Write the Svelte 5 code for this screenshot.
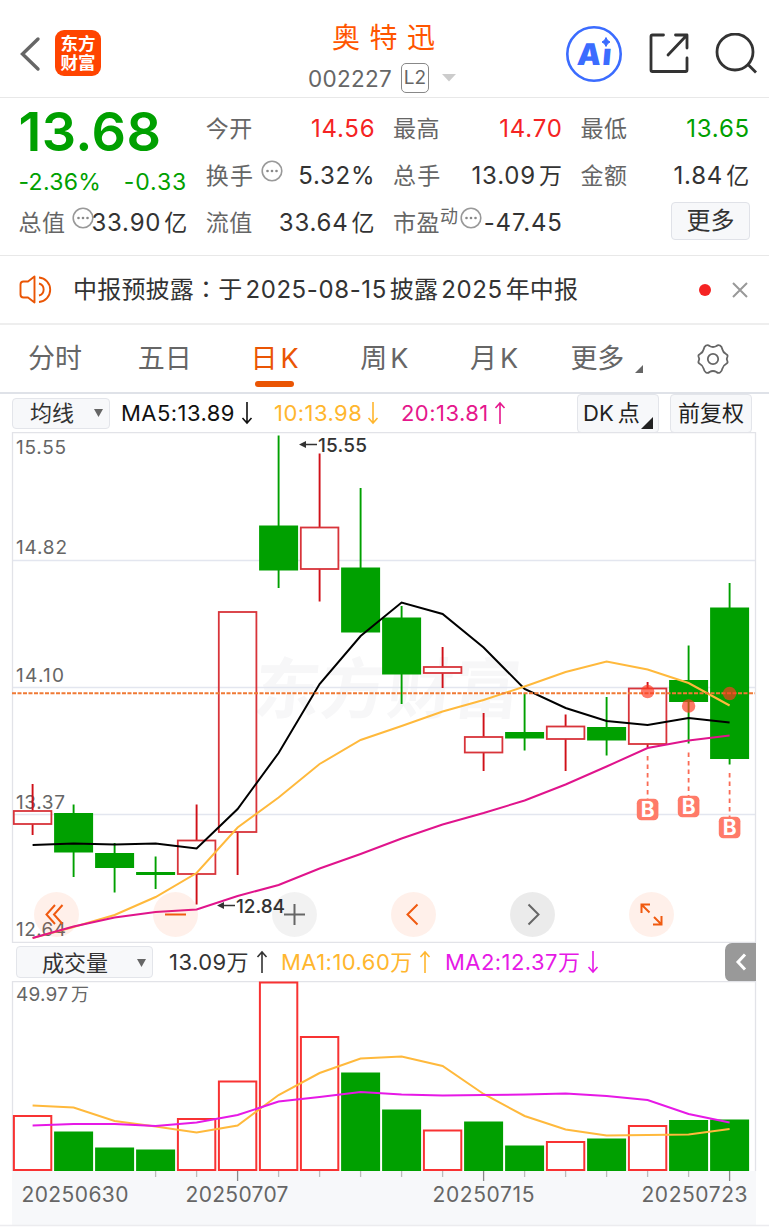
<script>
  const tabs = ['分时', '五日', '日K', '周K', '月K', '更多'];
  let activeTab = '日K';

  const labels = [
    { text: '15.55', y: 454, w: 50 },
    { text: '14.82', y: 554, w: 51 },
    { text: '14.10', y: 682, w: 48 },
    { text: '13.37', y: 809, w: 49 },
    { text: '12.64', y: 936, w: 50 }
  ];

  // high, body top, body bottom, low, up, volume top
  const days = [
    [784, 811, 824, 835, true, 1116],
    [804.5, 813, 852.5, 877, false, 1131.5],
    [843, 853, 868, 892.5, false, 1147.5],
    [856.5, 872, 875, 889, false, 1149.5],
    [804.5, 840.5, 874, 904.5, true, 1119],
    [612, 612, 832, 875, true, 1081.5],
    [435.5, 525.5, 570.5, 588, false, 982.5],
    [453.5, 527.5, 569, 601.5, true, 1037],
    [488, 567.5, 632.5, 632.5, false, 1072.5],
    [606, 617.5, 674.5, 704, false, 1109.5],
    [647, 667, 673, 688, true, 1130.5],
    [713, 737, 752.5, 771, true, 1121.5],
    [693.5, 732, 738.5, 750.5, false, 1145.5],
    [714.5, 726.5, 739, 771, true, 1142],
    [697, 727, 740.5, 755.5, false, 1138.5],
    [682, 688.5, 744, 747.5, true, 1126],
    [645.5, 680, 702, 743.5, false, 1120],
    [583, 607.5, 759, 764.5, false, 1119.5]
  ];
  const redVolume = [0, 4, 5, 6, 7, 10, 13, 15];

  const ma5 = [845, 843.5, 844.5, 843.5, 848.5, 809, 753, 684, 636, 602.5, 614, 647.5, 689, 708, 721, 725, 718, 722.5];
  const ma10 = [938, 927, 915, 897, 873, 827.5, 797.5, 764, 740, 726, 711.5, 700, 686.5, 672, 661.5, 669.5, 683, 705.5];
  const ma20 = [938, 926.5, 917.5, 912, 909.5, 896, 885, 868.5, 854, 838.5, 824.5, 813, 800.5, 784.5, 766.5, 748, 740.5, 735.5];
  const vol1 = [1105.5, 1107.5, 1121, 1126.5, 1132.5, 1125.5, 1095, 1073, 1058.5, 1056.5, 1066, 1094, 1116, 1129.5, 1135.5, 1135, 1134.5, 1129];
  const vol2 = [1125.5, 1124, 1124, 1126, 1122.5, 1115, 1101.5, 1097, 1092, 1094.5, 1095.5, 1095, 1094.5, 1093.5, 1096, 1100, 1114, 1122.5];

  const marks = [
    { i: 15, dot: 691.5, from: 756, box: 809.5 },
    { i: 16, dot: 706, from: 752.5, box: 806.5 },
    { i: 17, dot: 693.5, from: 773, box: 827.5 }
  ];

  const dates = [
    { text: '20250630', x: 21.5, w: 107 },
    { text: '20250707', x: 185.5, w: 103 },
    { text: '20250715', x: 432.5, w: 102 },
    { text: '20250723', x: 641.5, w: 106 }
  ];

  const cx = i => 32.6 + i * 41;
  const line = list => list.map((y, i) => `${cx(i)},${y}`).join(' ');
</script>

{#snippet dots()}
  <svg class="dots" width="22" height="22" viewBox="0 0 22 22">
    <circle cx="11" cy="11" r="9.8" fill="none" stroke="#999" stroke-width="1.6" />
    <circle cx="6.5" cy="11" r="1.3" fill="#888" />
    <circle cx="11" cy="11" r="1.3" fill="#888" />
    <circle cx="15.5" cy="11" r="1.3" fill="#888" />
  </svg>
{/snippet}

{#snippet arrow(up)}
  <svg class="arrow" width="12" height="24" viewBox="0 0 12 24">
    <path d={up ? 'M6 23V2M1.5 7L6 2l4.5 5' : 'M6 1v21M1.5 17L6 22l4.5-5'} fill="none" stroke="currentColor" stroke-width="1.6" />
  </svg>
{/snippet}

<div class="page">
  <header>
    <svg class="back" width="22" height="36" viewBox="0 0 22 36">
      <path d="M19 3L3.5 18L19 33" fill="none" stroke="#666" stroke-width="3.4" stroke-linecap="round" />
    </svg>
    <div class="logo"><span>东方</span><span>财富</span></div>
    <div class="title">
      <div class="name">奥特迅</div>
      <div class="code">
        <span class="num">002227</span>
        <span class="level">L2</span>
        <svg width="14" height="8" viewBox="0 0 14 8"><path d="M0 0h14L7 7.5z" fill="#ccc" /></svg>
      </div>
    </div>
    <div class="actions">
      <svg width="56" height="56" viewBox="0 0 56 56">
        <circle cx="28" cy="28" r="26.7" fill="none" stroke="#3b6cff" stroke-width="2.6" />
        <text class="ai" transform="translate(10.5 38.5) skewX(-5)">A<tspan dx="1.5">ı</tspan></text>
        <path d="M40 11.5q1 3.5 4 4.5q-3 1-4 4.5q-1-3.5-4-4.5q3-1 4-4.500z" fill="#3b6cff" stroke="#3b6cff" />
      </svg>
      <svg width="42" height="42" viewBox="0 0 42 42" fill="none" stroke="#333" stroke-width="2.8" stroke-linecap="round" stroke-linejoin="round">
        <path d="M15.5 2H4.5Q3 2 3 3.5V37Q3 38.5 4.5 38.5H37.5Q39 38.5 39 37V25M27.5 2H39V15M38 3L20 22" />
      </svg>
      <svg width="42" height="42" viewBox="0 0 42 42" fill="none" stroke="#333" stroke-width="2.8">
        <circle cx="20" cy="19" r="18" /><path d="M33 31.5l8 8" />
      </svg>
    </div>
  </header>

  <section class="quote">
    <div class="col">
      <div class="price">13.68</div>
      <div class="row change"><span>-2.36%</span><span class="diff">-0.33</span></div>
      <div class="row"><span class="label">总值{@render dots()}</span><b class="over">33.90<i>亿</i></b></div>
    </div>
    <div class="col">
      <div class="row"><span class="label">今开</span><b class="red">14.56</b></div>
      <div class="row"><span class="label wide">换手{@render dots()}</span><b>5.32%</b></div>
      <div class="row"><span class="label">流值</span><b>33.64<i>亿</i></b></div>
    </div>
    <div class="col">
      <div class="row"><span class="label">最高</span><b class="red">14.70</b></div>
      <div class="row"><span class="label wide">总手</span><b>13.09<i>万</i></b></div>
      <div class="row"><span class="label pe">市盈<sup>动</sup>{@render dots()}</span><b class="over">-47.45</b></div>
    </div>
    <div class="col">
      <div class="row"><span class="label">最低</span><b class="green">13.65</b></div>
      <div class="row"><span class="label">金额</span><b>1.84<i>亿</i></b></div>
      <div class="row end"><button class="more">更多</button></div>
    </div>
  </section>

  <section class="notice">
    <svg width="34" height="30" viewBox="0 0 34 30" fill="none" stroke="#ea5504" stroke-width="1.9" stroke-linejoin="round">
      <path d="M15.5 1.5L9 6.5H4.5Q1.5 6.5 1.5 9.5V19.5Q1.5 22.5 4.5 22.5H9L15.5 27.5z" />
      <path d="M20 8.5a6.2 6.2 0 0 1 0 12M20 2.5a12.3 12.3 0 0 1 0 24.5" />
    </svg>
    <p>中报预披露<span class="colon">：</span>于<em>2025-08-15</em>披露<em>2025</em>年中报</p>
    <span class="dot"></span>
    <svg width="16" height="16" viewBox="0 0 16 16"><path d="M1 1l14 14M15 1L1 15" stroke="#999" stroke-width="2" /></svg>
  </section>

  <nav>
    {#each tabs as tab}
      <button class:active={tab === activeTab} class:menu={tab === '更多'} on:click={() => (activeTab = tab)}>
        {#if tab.endsWith('K')}{tab[0]}<em>K</em>{:else}{tab}{/if}
        {#if tab === '更多'}<svg class="corner" width="8" height="8" viewBox="0 0 8 8"><path d="M8 0v8H0z" fill="#666" /></svg>{/if}
      </button>
    {/each}
    <div class="gear">
      <svg width="34" height="34" viewBox="0 0 34 34" fill="none" stroke="#666" stroke-width="1.8" stroke-linejoin="round">
        <path d="M10 3.5Q12 2.5 13.5 4Q17 6 20.5 4Q22 2.5 24 3.5Q26 4.8 26.2 7Q27 10.5 30 12Q32 13 31.5 14.5Q30 17 31.5 19.5Q32 21 30 22Q27 23.5 26.2 27Q26 29.2 24 30.5Q22 31.5 20.5 30Q17 28 13.5 30Q12 31.5 10 30.5Q8 29.2 7.8 27Q7 23.5 4 22Q2 21 2.5 19.5Q4 17 2.5 14.5Q2 13 4 12Q7 10.5 7.8 7Q8 4.8 10 3.5z" />
        <circle cx="17" cy="17" r="5.2" />
      </svg>
    </div>
  </nav>

  <div class="bar ma">
    <button class="select">均线<svg width="9" height="8" viewBox="0 0 9 8"><path d="M0 0h9L4.5 8z" fill="#666" /></svg></button>
    <span class="leg k1">MA5:13.89{@render arrow(false)}</span>
    <span class="leg k2">10:13.98{@render arrow(false)}</span>
    <span class="leg k3">20:13.81{@render arrow(true)}</span>
    <button class="tool dk">DK<i>点</i><svg width="12" height="12" viewBox="0 0 12 12"><path d="M12 0v12H0z" fill="#222" /></svg></button>
    <button class="tool">前复权</button>
  </div>

  <div class="kline">
    <svg width="769" height="511" viewBox="0 432 769 511">
      <text class="mark" transform="translate(252 713) skewX(-6)" textLength="266">东方财富</text>
      <path d="M12 560.5H755M12 687.5H755M12 814.5H755" stroke="#e3e6ef" stroke-width="1.6" />
      <path d="M12.5 943V432.5H755.5V943M12 942.5H756" fill="none" stroke="#e2e3e8" stroke-width="1.3" />
      {#each labels as l}
        <text class="axis" x="16" y={l.y} textLength={l.w}>{l.text}</text>
      {/each}
      {#each days as [high, top, bottom, low, up], i}
        {#if up}
          <path d="M{cx(i)} {high}V{top}M{cx(i)} {bottom}V{low}" stroke="#d01018" stroke-width="1.9" />
          <rect x={cx(i) - 18.8} y={top} width="37.6" height={bottom - top} fill={i === 0 || i === 5 ? 'none' : '#fff'} stroke="#d8343a" stroke-width="1.8" />
        {:else}
          <path d="M{cx(i)} {high}V{low}" stroke="#00a000" stroke-width="1.9" />
          <rect x={cx(i) - 19.5} y={top} width="39" height={bottom - top} fill="#00a000" />
        {/if}
      {/each}
      <polyline points={line(ma5)} stroke="#000" />
      <polyline points={line(ma10)} stroke="#ffb93c" />
      <polyline points={line(ma20)} stroke="#e0148c" />
      <path d="M12 693.3H755" stroke="#f07a35" stroke-width="2" stroke-dasharray="4 1.5" />
      {#each marks as m}
        <circle cx={cx(m.i)} cy={m.dot} r="6.7" fill="#ff3a20" fill-opacity=".68" />
        <path d="M{cx(m.i)} {m.from}V{m.box - 10}" stroke="#fa6b55" stroke-width="1.8" stroke-dasharray="4.5 4" />
        <rect x={cx(m.i) - 10.8} y={m.box - 10.8} width="21.6" height="21.6" rx="4.5" fill="#ff7b69" />
        <text class="buy" x={cx(m.i)} y={m.box + 7.5}>B</text>
      {/each}
      <path d="M302 444.5H317M220 905.5H235" stroke="#333" stroke-width="1.7" />
      <path d="M299 444.5l7-3.5v7zM217 905.5l7-3.5v7z" fill="#333" />
      <text class="peak" x="318" y="451.5" textLength="49">15.55</text>
      <text class="peak" x="236" y="913" textLength="49">12.84</text>
    </svg>
    <div class="float">
      <svg viewBox="0 0 45 45" class="hot"><path d="M21 13L12.5 22.5L21 32M28.5 13L20 22.5L28.5 32" /></svg>
      <svg viewBox="0 0 45 45" class="hot"><path d="M12 22.5h21" /></svg>
      <svg viewBox="0 0 45 45" class="cold light"><path d="M12 22.5h21M22.5 12v21" /></svg>
      <svg viewBox="0 0 45 45" class="hot"><path d="M26.5 12.5L16.5 22.5L26.5 32.5" /></svg>
      <svg viewBox="0 0 45 45" class="cold"><path d="M18.5 12.5L28.5 22.5L18.5 32.5" /></svg>
      <svg viewBox="0 0 45 45" class="hot"><path d="M12.5 21V12.5H21M12.5 12.5l8 8M25 25L32.5 32.5M24 32.5H32.5V24" /></svg>
    </div>
  </div>

  <div class="bar vol">
    <button class="select">成交量<svg width="9" height="8" viewBox="0 0 9 8"><path d="M0 0h9L4.5 8z" fill="#666" /></svg></button>
    <span class="leg v0">13.09万{@render arrow(true)}</span>
    <span class="leg v1">MA1:10.60万{@render arrow(true)}</span>
    <span class="leg v2">MA2:12.37万{@render arrow(false)}</span>
    <button class="fold" aria-label="收起">
      <svg width="12" height="20" viewBox="0 0 12 20"><path d="M10 2.5L3 10l7 7.5" fill="none" stroke="#fff" stroke-width="3" /></svg>
    </button>
  </div>

  <svg class="volume" width="769" height="250" viewBox="0 981 769 250">
    <rect x="12" y="1171" width="744" height="54" fill="#f7f8fa" />
    <path d="M12.5 1171V981.5H755.5V1171" fill="none" stroke="#e2e3e8" stroke-width="1.3" />
    <path d="M0 1225.5H769" stroke="#ececef" stroke-width="1.5" />
    <text class="axis" x="16" y="1001" textLength="52">49.97</text>
    <text class="axis wan" x="71" y="1000.5">万</text>
    {#each days as day, i}
      {#if redVolume.includes(i)}
        <rect x={cx(i) - 18.7} y={day[5]} width="37.4" height={1170 - day[5]} fill="#fff" stroke="#f83232" stroke-width="2" />
      {:else}
        <rect x={cx(i) - 19.5} y={day[5]} width="39" height={1171 - day[5]} fill="#00a000" />
      {/if}
      {#if i > 2}
        <path d="M{cx(i)} 1171V{i % 6 === 5 ? 1181 : 1177}" stroke={i % 6 === 5 ? '#888' : '#bbb'} stroke-width="1.3" />
      {/if}
    {/each}
    <polyline points={line(vol1)} stroke="#ffb93c" />
    <polyline points={line(vol2)} stroke="#e619e6" />
    {#each dates as d}
      <text class="date" x={d.x} y="1202" textLength={d.w}>{d.text}</text>
    {/each}
  </svg>
</div>

<style>
  :global(body) {
    margin: 0;
    background: #fff;
  }
  .page {
    width: 769px;
    height: 1231px;
    overflow: hidden;
    font-family: Inter, "Noto Sans CJK SC", sans-serif;
    line-height: 1.2;
    color: #333;
  }
  svg {
    display: block;
    flex: none;
  }
  button {
    font: inherit;
    color: inherit;
    letter-spacing: inherit;
    margin: 0;
    padding: 0;
    border: 0;
    background: none;
  }
  i, em, b {
    font-style: normal;
    font-weight: 400;
  }
  .red { color: #f52323; }
  .green { color: #00a000; }

  header {
    display: flex;
    align-items: center;
    height: 98px;
    padding: 0 12px 0 19px;
    box-sizing: border-box;
    border-bottom: 1px solid #e8e8e8;
  }
  .back {
    margin: 10px 14px 0 0;
  }
  .logo {
    width: 46px;
    height: 46px;
    margin-top: 9px;
    border-radius: 9px;
    background: #ff4400;
    color: #fff;
    display: flex;
    flex-direction: column;
    align-items: center;
    justify-content: center;
    font-size: 17.5px;
    font-weight: 700;
    line-height: 19px;
  }
  .title {
    width: 170px;
    margin-left: 207px;
    display: flex;
    flex-direction: column;
  }
  .name {
    font-size: 28px;
    line-height: 38px;
    letter-spacing: 9.5px;
    color: #ff5500;
    margin: 15px 0 0 24px;
  }
  .code {
    display: flex;
    align-items: center;
    height: 30px;
    margin: 6px 0 0;
    color: #666;
    font-size: 22.5px;
  }
  .num {
    width: 93px;
    letter-spacing: 0.3px;
  }
  .level {
    width: 26px;
    height: 28px;
    line-height: 28px;
    border: 1px solid #888;
    border-radius: 5px;
    font-size: 19px;
    text-align: center;
    margin-right: 13px;
  }
  .actions {
    display: flex;
    align-items: center;
    margin: 10px 0 0 auto;
    gap: 25.5px;
  }
  .ai {
    font-size: 30px;
    font-weight: 900;
    fill: #3b6cff;
  }

  .quote {
    display: flex;
    gap: 18.7px;
    height: 157px;
    padding: 0 20px 0 18.5px;
    border-bottom: 1px solid #e8e8e8;
    font-size: 24px;
    letter-spacing: 0.8px;
  }
  .col {
    width: 168.7px;
    padding-top: 8px;
  }
  .row {
    display: flex;
    justify-content: space-between;
    align-items: center;
    height: 47px;
    white-space: nowrap;
  }
  .row b {
    margin-right: -1px;
  }
  .row i {
    margin-left: 3px;
    font-size: 23px;
  }
  .label {
    display: flex;
    color: #666;
    font-size: 23px;
    letter-spacing: 0.5px;
    padding-top: 1px;
  }
  .wide {
    letter-spacing: 1.2px;
  }
  .dots {
    margin: -3px 0 0 6.5px;
  }
  .price {
    height: 52px;
    line-height: 52px;
    font-size: 54px;
    font-weight: 600;
    letter-spacing: 0.4px;
    color: #00a000;
  }
  .change {
    height: 42px;
    padding-top: 8px;
    box-sizing: border-box;
    color: #00a000;
    font-size: 23px;
    letter-spacing: 0.3px;
  }
  .diff {
    letter-spacing: 0.9px;
  }
  .row .over {
    margin-left: -16px;
  }
  .pe sup {
    font-size: 18px;
    line-height: 14px;
  }
  .label.pe {
    margin-right: 2px;
  }
  .pe :global(.dots) {
    margin-left: 1.5px;
  }
  .end {
    justify-content: flex-end;
  }
  .more {
    width: 79px;
    height: 38px;
    box-sizing: border-box;
    margin: -5px -1px 0 0;
    border: 1px solid #e0e2e8;
    border-radius: 4px;
    background: #f7f8fa;
    letter-spacing: 0;
  }

  .notice {
    display: flex;
    align-items: center;
    height: 67px;
    padding: 0 21px 0 19px;
    border-bottom: 2px solid #eee;
  }
  .notice p {
    flex: 1;
    margin: 1px 0 0 20px;
    font-size: 24px;
    letter-spacing: 0.2px;
    white-space: nowrap;
  }
  .notice em {
    margin: 0 3px;
    letter-spacing: 0.6px;
  }
  .colon {
    font-family: "Noto Sans CJK TC", sans-serif;
    line-height: 1;
  }
  .dot {
    width: 12px;
    height: 12px;
    margin-right: 21px;
    border-radius: 50%;
    background: #f52323;
  }

  nav {
    display: flex;
    height: 67px;
    border-bottom: 2px solid #dfe2e8;
  }
  nav button, .gear {
    position: relative;
    width: 109.8px;
    box-sizing: border-box;
    display: flex;
    align-items: center;
    justify-content: center;
    font-size: 27px;
    color: #666;
  }
  nav button {
    padding-top: 2px;
  }
  nav em {
    margin-left: 3px;
  }
  nav .active {
    color: #ea5504;
  }
  nav .active::after {
    content: "";
    position: absolute;
    left: 35px;
    bottom: 5px;
    width: 39px;
    height: 6px;
    border-radius: 3px;
    background: #ea5504;
  }
  nav .menu {
    padding-right: 13px;
  }
  .corner {
    position: absolute;
    right: 16px;
    bottom: 19px;
  }
  .gear {
    padding-right: 1px;
  }

  .bar {
    display: flex;
    align-items: center;
    height: 38px;
    font-size: 22px;
    white-space: nowrap;
  }
  .select {
    display: flex;
    align-items: center;
    justify-content: space-between;
    box-sizing: border-box;
    width: 98px;
    height: 31px;
    margin-left: 12px;
    padding: 0 6px 0 17px;
    border: 1px solid #e3e5ea;
    border-radius: 4px;
    background: #f7f8fa;
  }
  .leg {
    display: flex;
    align-items: center;
    justify-content: space-between;
    box-sizing: border-box;
    letter-spacing: 0.45px;
  }
  .k1 { width: 132px; margin-left: 11px; color: #111; }
  .k2 { width: 105px; margin-left: 21px; color: #ffb62e; }
  .k3 { width: 105px; margin-left: 22px; color: #e5178c; }
  .tool {
    width: 82px;
    height: 39px;
    box-sizing: border-box;
    margin-left: 11px;
    border: 1px solid #e3e5ea;
    border-radius: 4px;
    background: #f7f8fa;
    color: #222;
  }
  .dk {
    display: flex;
    align-items: center;
    margin-left: auto;
    padding-left: 5px;
  }
  .dk i {
    margin-left: 4px;
  }
  .dk svg {
    align-self: flex-end;
    margin: 0 0 3px 1px;
  }
  .ma .tool:last-child {
    margin-right: 17px;
  }

  .kline {
    position: relative;
    height: 511px;
  }
  polyline {
    fill: none;
    stroke-width: 2;
  }
  .axis {
    font-size: 19px;
    fill: #666;
  }
  .wan {
    font-size: 18px;
  }
  .date {
    font-size: 21px;
    fill: #666;
  }
  .peak {
    font-size: 19px;
    font-weight: 500;
    fill: #333;
  }
  .mark {
    font-size: 66px;
    font-weight: 700;
    fill: #f7f7f8;
  }
  .buy {
    font-size: 21px;
    font-weight: 700;
    fill: #fff;
    text-anchor: middle;
  }
  .float {
    position: absolute;
    left: 33.5px;
    top: 459.5px;
    display: flex;
    gap: 74.1px;
  }
  .float svg {
    width: 45px;
    height: 45px;
    border-radius: 50%;
    fill: none;
    stroke-width: 2;
  }
  .hot {
    background: rgba(255, 90, 20, 0.09);
    stroke: #f05a10;
  }
  .cold {
    background: rgba(0, 0, 0, 0.08);
    stroke: #666;
  }
  .light {
    background: rgba(0, 0, 0, 0.05);
  }

  .vol .select {
    width: 137px;
    height: 32px;
    margin-left: 16px;
    padding: 2px 6px 0 25px;
  }
  .vol .leg {
    padding-top: 1px;
  }
  .v0 { width: 99px; margin-left: 16px; }
  .v1 { width: 150px; margin-left: 13px; color: #ffb62e; }
  .v2 { width: 154px; margin-left: 14px; color: #e619e6; }
  .fold {
    display: flex;
    align-items: center;
    justify-content: center;
    width: 31px;
    height: 39px;
    margin: 0 13px 0 auto;
    border-radius: 7px 0 0 7px;
    background: #999;
  }
</style>
